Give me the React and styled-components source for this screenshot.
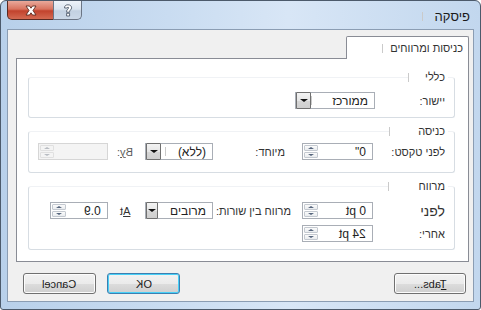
import React from "react";
import styled, { createGlobalStyle } from "styled-components";

const GlobalStyle = createGlobalStyle`
  html, body {
    margin: 0;
    padding: 0;
    background: #ffffff;
  }
  body {
    font-family: "Liberation Sans", "DejaVu Sans", sans-serif;
    font-size: 11px;
    color: #333333;
  }
`;

const Window = styled.div`
  width: 481px;
  height: 310px;
  box-sizing: border-box;
  border: 1px solid #4c5a6b;
  border-radius: 6px 6px 3px 3px;
  background: linear-gradient(90deg, #b8d0ea 0%, #c9dcf1 35%, #d8e6f6 60%, #c2d7ee 100%);
  display: flex;
  flex-direction: column;
  overflow: hidden;
`;

const TitleBar = styled.div`
  height: 28px;
  display: flex;
  align-items: flex-start;
  padding-left: 6px;
  padding-right: 10px;
`;

const CaptionButtons = styled.div`
  display: flex;
`;

const CaptionButton = styled.div`
  width: ${(p) => p.$w}px;
  height: 19px;
  box-sizing: border-box;
  border: 1px solid ${(p) => (p.$close ? "#5a2a22" : "#6b7584")};
  border-top: none;
  border-radius: ${(p) => (p.$close ? "0 0 0 5px" : "0 0 5px 0")};
  margin-left: ${(p) => (p.$close ? 0 : -1)}px;
  display: flex;
  align-items: center;
  justify-content: center;
  background: ${(p) =>
    p.$close
      ? "linear-gradient(180deg, #e9a99b 0%, #d8735f 45%, #c2432d 55%, #d46a52 100%)"
      : "linear-gradient(180deg, #eef3f9 0%, #dae4ef 45%, #c3d1e1 55%, #ccd9e8 100%)"};
`;

const Title = styled.div`
  flex: 1;
  display: flex;
  justify-content: flex-end;
  align-items: center;
  height: 30px;
  font-size: 13px;
  color: #1a1a1a;
`;

const Tick = styled.span`
  display: inline-block;
  width: 1px;
  height: 9px;
  background: #cacaca;
  margin-right: ${(p) => p.$gap || 12}px;
  vertical-align: middle;
`;

const TitleTick = styled(Tick)`
  margin-right: 0;
  margin-left: 0;
`;

const TitleText = styled.span`
  margin-left: 12px;
`;

const Client = styled.div`
  flex: 1;
  margin: 0 6px 7px 6px;
  border: 1px solid #8b9db3;
  background: #f0f0f0;
  display: flex;
  flex-direction: column;
  direction: rtl;
  padding: 6px 4px 0 8px;
`;

const TabStrip = styled.div`
  display: flex;
  height: 22px;
`;

const Tab = styled.div`
  width: 123px;
  height: 23px;
  box-sizing: border-box;
  border: 1px solid #898c95;
  border-bottom: none;
  border-radius: 2px 2px 0 0;
  background: #ffffff;
  position: relative;
  z-index: 1;
  display: flex;
  align-items: center;
  padding-right: 5px;
  white-space: nowrap;
`;

const Panel = styled.div`
  height: 204px;
  box-sizing: border-box;
  border: 1px solid #898c95;
  background: #ffffff;
  padding: 18px 13px 0 11px;
  display: flex;
  flex-direction: column;
  gap: 13px;
`;

const Group = styled.div`
  position: relative;
  height: ${(p) => p.$h}px;
  box-sizing: border-box;
  border: 1px solid #d7dde3;
  border-top-color: #f0f2f5;
  border-radius: 3px;
  padding: ${(p) => p.$pt}px 9px 0 0;
  display: flex;
  flex-direction: column;
  gap: 6px;
`;

const Legend = styled.div`
  position: absolute;
  top: -7px;
  right: 6px;
  background: #ffffff;
  padding: 0 3px 0 0;
  height: 13px;
  line-height: 13px;
  display: flex;
  align-items: center;
  white-space: nowrap;
`;

const Row = styled.div`
  display: flex;
  align-items: center;
  height: 17px;
`;

const Label = styled.div`
  width: ${(p) => p.$w}px;
  box-sizing: border-box;
  padding-right: ${(p) => p.$pr || 0}px;
  font-size: ${(p) => p.$size || 11}px;
  color: ${(p) => (p.$muted ? "#5a5a5a" : "#333333")};
  white-space: nowrap;
`;

const Flip = styled.span`
  display: inline-block;
  transform: scaleX(-1);
  direction: ltr;
  unicode-bidi: isolate;
`;

const Accel = styled.span`
  text-decoration: underline;
`;

const Box = styled.div`
  width: ${(p) => p.$w}px;
  height: 17px;
  box-sizing: border-box;
  border: 1px solid ${(p) => (p.$disabled ? "#d6d6d6" : "#a9aeb6")};
  background: ${(p) => (p.$disabled ? "#f4f4f4" : "#ffffff")};
  display: flex;
  align-items: stretch;
`;

const Field = styled.div`
  flex: 1;
  display: flex;
  align-items: center;
  padding-right: 6px;
  white-space: nowrap;
  font-size: 12px;
  color: #222222;
`;

const SpinButtons = styled.div`
  width: 14px;
  display: flex;
  flex-direction: column;
  padding: 1px;
  gap: 1px;
`;

const SpinHalf = styled.div`
  flex: 1;
  border: 1px solid ${(p) => (p.$disabled ? "#e0e0e0" : "#c4c9d0")};
  border-radius: 1px;
  background: ${(p) =>
    p.$disabled ? "#f4f4f4" : "linear-gradient(180deg, #fbfbfb 0%, #e9ecef 100%)"};
  display: flex;
  align-items: center;
  justify-content: center;
`;

const Arrow = styled.span`
  width: 0;
  height: 0;
  border-left: ${(p) => p.$s}px solid transparent;
  border-right: ${(p) => p.$s}px solid transparent;
  ${(p) => (p.$up ? "border-bottom" : "border-top")}: ${(p) => p.$s - 1}px solid
    ${(p) => p.$color};
`;

const DropButton = styled.div`
  width: 15px;
  box-sizing: border-box;
  border: 1px solid #707070;
  margin: -1px -1px -1px 0;
  border-radius: 1px;
  background: linear-gradient(180deg, #f3f3f3 0%, #e6e6e6 50%, #d6d6d6 51%, #cfcfcf 100%);
  display: flex;
  align-items: center;
  justify-content: center;
`;

const ButtonRow = styled.div`
  display: flex;
  align-items: center;
  padding: 11px 3px 0 7px;
  gap: 11px;
`;

const Button = styled.div`
  width: ${(p) => p.$w}px;
  height: 21px;
  box-sizing: border-box;
  border: 1px solid ${(p) => (p.$default ? "#3c7fb1" : "#707070")};
  border-radius: 3px;
  background: linear-gradient(180deg, #f2f2f2 0%, #ebebeb 50%, #dddddd 51%, #cfcfcf 100%);
  box-shadow: ${(p) => (p.$default ? "inset 0 0 0 1px #48d0f7" : "inset 0 0 0 1px #fcfcfc")};
  display: flex;
  align-items: center;
  justify-content: center;
  font-size: 11px;
  color: #1a1a1a;
`;

const Spacer = styled.div`
  flex: 1;
`;

function Spin({ w, value, disabled, flip }) {
  const color = disabled ? "#b8bcc2" : "#56657d";
  return (
    <Box $w={w} $disabled={disabled}>
      <Field>{flip ? <Flip>{value}</Flip> : value}</Field>
      <SpinButtons>
        <SpinHalf $disabled={disabled}>
          <Arrow $up $s={3} $color={color} />
        </SpinHalf>
        <SpinHalf $disabled={disabled}>
          <Arrow $s={3} $color={color} />
        </SpinHalf>
      </SpinButtons>
    </Box>
  );
}

function Combo({ w, value, gap }) {
  return (
    <Box $w={w}>
      <Field>
        {value}
        <Tick $gap={gap} />
      </Field>
      <DropButton>
        <Arrow $s={4} $color="#111111" />
      </DropButton>
    </Box>
  );
}

export default function App() {
  return (
    <>
      <GlobalStyle />
      <Window>
        <TitleBar>
          <CaptionButtons>
            <CaptionButton $w={47} $close>
              <svg width="16" height="11" viewBox="0 0 16 11">
                <path
                  d="M3 1 L6.5 1 L8 3.2 L9.5 1 L13 1 L10 5.5 L13 10 L9.5 10 L8 7.8 L6.5 10 L3 10 L6 5.5 Z"
                  fill="#ffffff"
                  stroke="#5b2a20"
                  strokeWidth="0.9"
                  strokeLinejoin="round"
                />
              </svg>
            </CaptionButton>
            <CaptionButton $w={29}>
              <svg width="10" height="13" viewBox="0 0 10 13">
                <path
                  d="M1.5 4 C1.5 1.5 3.2 0.8 5 0.8 C7 0.8 8.6 1.9 8.6 3.8 C8.6 5.6 6.6 6.1 6.6 7.6 L6.6 8.2 L3.6 8.2 L3.6 7.3 C3.6 5.4 5.6 5 5.6 3.9 C5.6 3.3 5.3 3.1 5 3.1 C4.6 3.1 4.4 3.5 4.4 4 Z M3.6 9.3 L6.6 9.3 L6.6 12 L3.6 12 Z"
                  fill="#ffffff"
                  stroke="#3d4a5c"
                  strokeWidth="0.8"
                  strokeLinejoin="round"
                />
              </svg>
            </CaptionButton>
          </CaptionButtons>
          <Title>
            <TitleTick />
            <TitleText>פיסקה</TitleText>
          </Title>
        </TitleBar>

        <Client>
          <TabStrip>
            <Tab>
              כניסות ומרווחים
              <Tick $gap={7} />
            </Tab>
          </TabStrip>

          <Panel>
            <Group $h={41} $pt={14}>
              <Legend>
                כללי
                <Tick $gap={16} />
              </Legend>
              <Row>
                <Label $w={70}>יישור:</Label>
                <Combo w={80} value="ממורכז" gap={20} />
              </Row>
            </Group>

            <Group $h={42} $pt={11}>
              <Legend>
                כניסה
                <Tick $gap={28} />
              </Legend>
              <Row>
                <Label $w={72}>לפני טקסט:</Label>
                <Spin w={71} value={'0"'} />
                <Label $w={89} $pr={17}>מיוחד:</Label>
                <Combo w={68} value="(ללא)" gap={12} />
                <Label $w={37} $pr={12} $muted>
                  <Flip>
                    B<Accel>y</Accel>:
                  </Flip>
                </Label>
                <Spin w={70} value="" disabled />
              </Row>
            </Group>

            <Group $h={64} $pt={15}>
              <Legend>
                מרווח
                <Tick $gap={30} />
              </Legend>
              <Row>
                <Label $w={72} $size={14}>לפני</Label>
                <Spin w={71} value="0 pt" flip />
                <Label $w={89} $pr={11}>מרווח בין שורות:</Label>
                <Combo w={68} value="מרובים" gap={12} />
                <Label $w={37} $pr={15}>
                  <Flip>
                    <Accel>A</Accel>t
                  </Flip>
                </Label>
                <Spin w={58} value="0.9" flip />
              </Row>
              <Row>
                <Label $w={72}>אחרי:</Label>
                <Spin w={71} value="24 pt" flip />
              </Row>
            </Group>
          </Panel>

          <ButtonRow>
            <Button $w={72}>
              <Flip>
                <Accel>T</Accel>abs...
              </Flip>
            </Button>
            <Spacer />
            <Button $w={73} $default>
              <Flip>OK</Flip>
            </Button>
            <Button $w={73}>
              <Flip>Cancel</Flip>
            </Button>
          </ButtonRow>
        </Client>
      </Window>
    </>
  );
}
